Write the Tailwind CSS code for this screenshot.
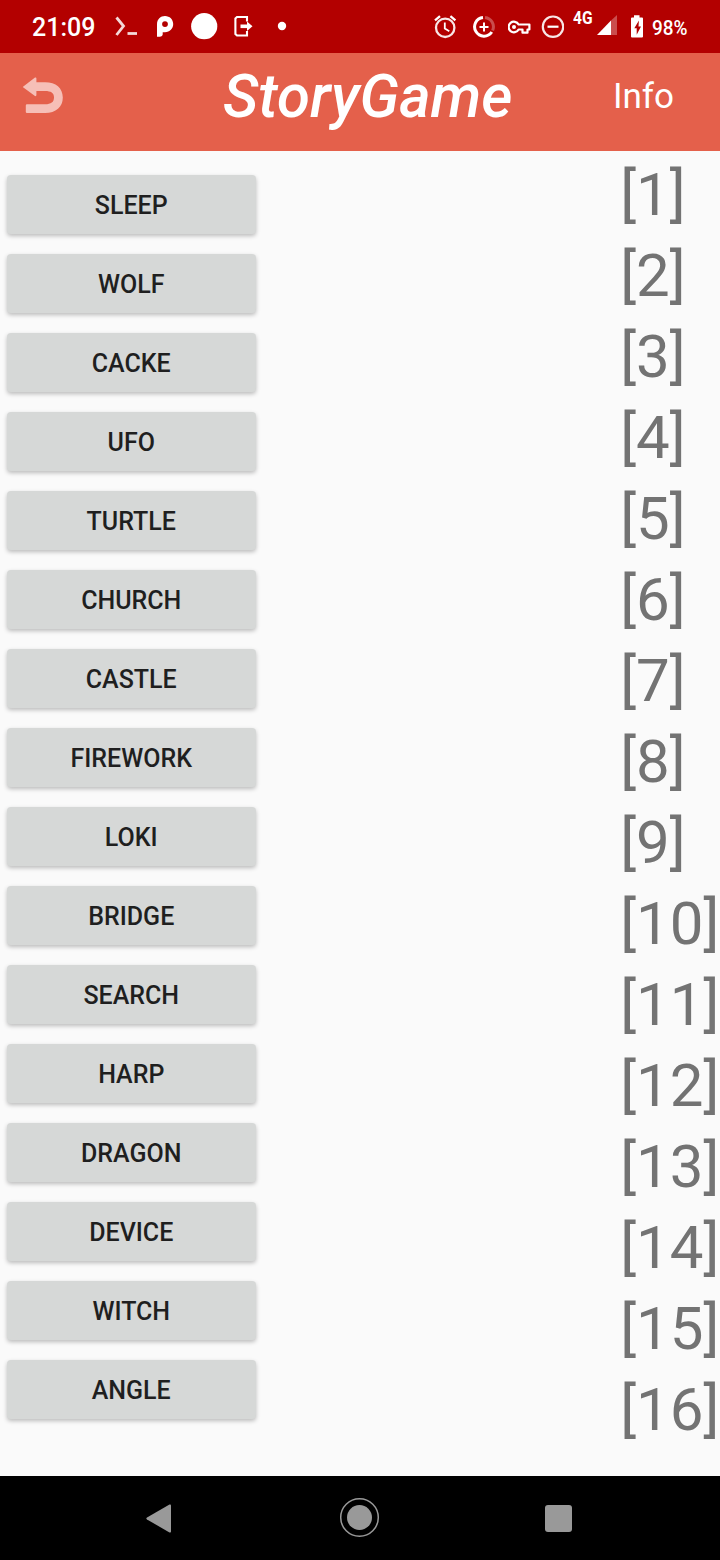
<!DOCTYPE html>
<html lang="en">
<head>
<meta charset="utf-8">
<title>StoryGame</title>
<script src="https://cdn.jsdelivr.net/npm/@tailwindcss/browser@4"></script>
</head>
<body class="w-[720px] h-[1560px] overflow-hidden flex flex-col bg-[#fafafa] font-['Roboto',sans-serif]">
<div class="h-[53px] shrink-0 bg-[#b30000] text-white flex items-start">
  <span class="ml-8 mt-3 w-[82px] text-[25px] leading-8 font-medium">21:09</span>
  <svg class="w-6 h-[53px]" viewBox="114 0 24 53" fill="none" stroke="#fff" stroke-opacity=".85" stroke-width="2.8"><path d="M116.500 17.500L123.500 26L116.500 35"/><path d="M127.500 33.500h9.500"/></svg>
  <svg class="ml-4 w-[22px] h-[53px]" viewBox="154 0 22 53" fill="#fff"><path fill-rule="evenodd" d="M157 36.800V24.500C157 19 160.500 16 165 16C169.800 16 173.200 19.600 173.200 24C173.200 28.500 169.800 32.200 165 32.200H162.700V34C162.700 36 161.500 36.800 157 36.800ZM165 21.200A2.900 2.900 0 1 0 165 27A2.900 2.900 0 1 0 165 21.200Z"/></svg>
  <svg class="ml-[14px] w-7 h-[53px]" viewBox="190 0 28 53"><circle cx="204.200" cy="26.200" r="13.100" fill="#fff"/></svg>
  <svg class="ml-4 w-5 h-[53px]" viewBox="234 0 20 53" fill="none" stroke="#fff" stroke-width="2.100"><path d="M247 21.500V17H237L235.400 18.500V34L237 35.500H247V31"/><path d="M240.500 26.300H248" stroke-width="3.600"/><path d="M247 21.500L252.500 26.300L247 31.100Z" fill="#fff" stroke="none"/></svg>
  <svg class="ml-[22px] w-3 h-[53px]" viewBox="276 0 12 53"><circle cx="282" cy="26" r="4.200" fill="#fff"/></svg>
  <svg class="ml-[144px] w-7 h-[53px]" viewBox="432 0 28 53" fill="none" stroke="#fff" stroke-width="2.300"><circle cx="445.200" cy="27.800" r="9.200" stroke-opacity=".9"/><path d="M444.800 22.500V28.500L449.300 31.300" stroke-width="1.800"/><path d="M435 20.300l5-4.200M455.400 20.300l-5-4.200"/></svg>
  <svg class="ml-3 w-6 h-[53px]" viewBox="472 0 24 53" fill="none" stroke="#fff" stroke-width="3"><path d="M485 17.400A9.400 9.400 0 0 1 492.600 30.500" stroke-opacity=".3"/><path d="M483 17.400A9.400 9.400 0 1 0 491.800 32"/><path d="M484 22.500v9M479.500 27h9" stroke-width="2"/></svg>
  <svg class="ml-3 w-6 h-[53px]" viewBox="508 0 24 53" fill="none" stroke="#fff" stroke-width="2.200"><path d="M518.600 24.500A5.300 5.300 0 1 0 518.600 29.500H522.500V32.700H527.500V29.500H529.400V24.500Z" stroke-linejoin="round"/><circle cx="514" cy="27" r="2" fill="#fff" stroke="none"/></svg>
  <svg class="ml-2 w-6 h-[53px]" viewBox="540 0 24 53" fill="none" stroke="#fff" stroke-width="2.200"><circle cx="553" cy="26.700" r="10.200" stroke-opacity=".9"/><path d="M547.500 26.700h11"/></svg>
  <span class="ml-[9px] mt-[6px] w-[23px] text-[19px] leading-6 font-bold whitespace-nowrap origin-left scale-x-[.82]">4G</span>
  <svg class="w-[22px] h-[53px]" viewBox="596 0 22 53" fill="#fff"><path d="M597 35L611 20.500V35Z"/><path d="M611 20.500L617 15V35H611Z" fill-opacity=".3"/></svg>
  <svg class="ml-3 w-[14px] h-[53px]" viewBox="630 0 14 53"><path d="M631 18.500Q631 17.500 632 17.500H634V15.300H639.500V17.500H642Q643 17.500 643 18.500V36.500Q643 37.500 642 37.500H632Q631 37.500 631 36.500Z" fill="#fff"/><path d="M638.900 20.500L634.300 28.300H636.700V34.800L641 26.500H638.500Z" fill="#b30000"/></svg>
  <span class="ml-2 mt-[15.500px] text-[20px] leading-6 font-medium origin-left scale-x-[.95]">98%</span>
</div>
<header class="h-[98px] shrink-0 bg-[#e4604b] text-white flex items-start">
  <svg class="ml-5 w-12 h-[98px]" viewBox="20 53 48 98" fill="#f6bfb7"><path d="M22.700 87L35 77.500Q36.400 77 36.400 78.500V82.200H45C56 82.200 62.800 88 62.800 97.500C62.800 107 56 113 45 113H27Q25.800 113 25.800 112V105.500Q25.800 104.300 27 104.300H45C51 104.300 54 102 54 97.500C54 93 51 91 45 91H36.400V95Q36.400 96.500 35 96Z"/></svg>
  <h1 class="ml-[155px] mt-[9px] w-[300px] text-[60px] leading-[70px] font-medium italic">StoryGame</h1>
  <span class="ml-[90px] mt-6 text-[35px] leading-10">Info</span>
</header>
<main class="grow flex justify-between">
  <div id="words" class="pt-6 pl-[7px] flex flex-col gap-5"></div>
  <div id="numbers" class="pt-[3px] w-[99.8px] text-[60px] leading-[81px] text-[#737373] whitespace-nowrap"></div>
</main>
<nav class="h-[84px] shrink-0 bg-black flex items-start">
  <svg class="ml-[144px] w-[30px] h-[84px]" viewBox="144 1476 30 84" fill="#999"><path d="M147 1517.400L169.500 1504.500Q171 1504 171 1505.500V1531.500Q171 1533 169.500 1532.400L147 1519.500Q145.600 1518.500 147 1517.400Z"/></svg>
  <svg class="ml-[164px] w-[44px] h-[84px]" viewBox="338 1476 44 84"><circle cx="359.500" cy="1517.500" r="18.800" fill="none" stroke="#999" stroke-width="1.500"/><circle cx="359.500" cy="1517.500" r="12.500" fill="#999"/></svg>
  <div class="ml-[163px] mt-[29px] size-[27px] rounded-[3px] bg-[#999]"></div>
</nav>
<script>
const words = ["SLEEP","WOLF","CACKE","UFO","TURTLE","CHURCH","CASTLE","FIREWORK","LOKI","BRIDGE","SEARCH","HARP","DRAGON","DEVICE","WITCH","ANGLE"];
document.getElementById("words").innerHTML = words.map(w => `<button class="w-[249px] h-[59px] rounded-[4px] bg-[#d6d8d7] text-[#1f1f1f] text-[25px] leading-[59px] pt-px pr-[0.5px] font-medium shadow-[0_2px_4px_rgba(0,0,0,0.25)]">${w}</button>`).join("");
document.getElementById("numbers").innerHTML = words.map((w, i) => `<div>[${i + 1}]</div>`).join("");
</script>
</body>
</html>
